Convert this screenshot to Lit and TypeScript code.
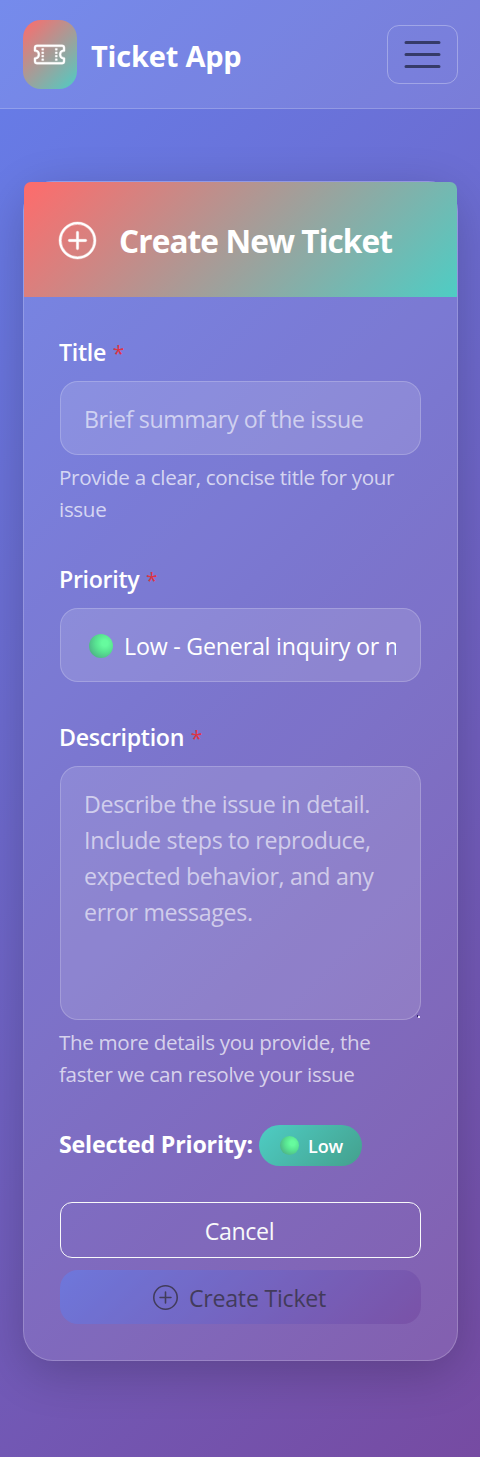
import { LitElement, html, svg, css } from "lit";
import { customElement } from "lit/decorators.js";

const plusCircle = svg`
  <path d="M8 15A7 7 0 1 1 8 1a7 7 0 0 1 0 14m0 1A8 8 0 1 0 8 0a8 8 0 0 0 0 16"/>
  <path d="M8 4a.5.5 0 0 1 .5.5v3h3a.5.5 0 0 1 0 1h-3v3a.5.5 0 0 1-1 0v-3h-3a.5.5 0 0 1 0-1h3v-3A.5.5 0 0 1 8 4"/>`;

const ticket = svg`
  <path d="M4 4.85v.9h1v-.9zm7 0v.9h1v-.9zm-7 1.8v.9h1v-.9zm7 0v.9h1v-.9zm-7 1.8v.9h1v-.9zm7 0v.9h1v-.9zm-7 1.8v.9h1v-.9zm7 0v.9h1v-.9z"/>
  <path d="M1.5 3A1.5 1.5 0 0 0 0 4.5V6a.5.5 0 0 0 .5.5 1.5 1.5 0 1 1 0 3 .5.5 0 0 0-.5.5v1.5A1.5 1.5 0 0 0 1.5 13h13a1.5 1.5 0 0 0 1.5-1.5V10a.5.5 0 0 0-.5-.5 1.5 1.5 0 0 1 0-3A.5.5 0 0 0 16 6V4.5A1.5 1.5 0 0 0 14.5 3zM1 4.5a.5.5 0 0 1 .5-.5h13a.5.5 0 0 1 .5.5v1.05a2.5 2.5 0 0 0 0 4.9v1.05a.5.5 0 0 1-.5.5h-13a.5.5 0 0 1-.5-.5v-1.05a2.5 2.5 0 0 0 0-4.9z"/>`;

@customElement("app-root")
export class AppRoot extends LitElement {
  static styles = css`
    :host {
      display: block;
      min-height: 1457px;
      box-sizing: border-box;
      background: linear-gradient(135deg, #667eea 0%, #764ba2 100%);
      font-family: "Open Sans", "Noto Sans", sans-serif;
      font-size: 23.2px;
      letter-spacing: -0.4px;
      line-height: 36px;
      color: #fff;
      overflow: hidden;
    }
    * { box-sizing: border-box; }
    svg { display: block; fill: currentColor; flex: none; }
    .nav {
      height: 109px;
      display: flex;
      align-items: center;
      padding: 0 22px 0 23px;
      background: rgba(255, 255, 255, 0.1);
      border-bottom: 1px solid rgba(255, 255, 255, 0.2);
    }
    .logo {
      width: 54px;
      height: 69px;
      border-radius: 18px;
      display: grid;
      place-items: center;
      background: linear-gradient(135deg, #ff6b6b, #4ecdc4);
    }
    .logo svg { width: 31px; height: 31px; margin-right: 1px; stroke: currentColor; stroke-width: 0.2; overflow: visible; }
    .brand {
      margin-left: 14px;
      padding-top: 3px;
      flex: 1;
      font-size: 29px;
      font-weight: 700;
      letter-spacing: -0.2px;
      white-space: nowrap;
    }
    .toggler {
      width: 71px;
      height: 59px;
      border: 1px solid rgba(255, 255, 255, 0.3);
      border-radius: 12px;
      padding: 0;
      background: none;
      color: #363b69;
      display: grid;
      place-items: center;
    }
    .toggler svg { width: 45px; height: 45px; fill: none; }
    .card {
      margin: 72px 22px 0 23px;
      height: 1180px;
      border: 1px solid rgba(255, 255, 255, 0.2);
      border-radius: 30px;
      background: rgba(255, 255, 255, 0.1);
      box-shadow: 0 12px 48px rgba(0, 0, 0, 0.2);
    }
    .head {
      height: 115px;
      border-radius: 7px 7px 0 0;
      background: linear-gradient(135deg, #ff6b6b, #4ecdc4);
      display: flex;
      align-items: center;
      padding-left: 35px;
      padding-top: 3px;
    }
    .head svg { width: 37px; height: 37px; margin-top: -1px; stroke: currentColor; stroke-width: 0.18; overflow: visible; }
    .head h1 {
      margin: 0 0 0 23px;
      font-size: 31.6px;
      font-weight: 700;
      letter-spacing: -0.92px;
      white-space: nowrap;
    }
    .body { padding: 36px 36px 0 36px; }
    .label {
      display: block;
      height: 48px;
      padding-top: 1px;
      font-weight: 600;
      letter-spacing: -0.32px;
      white-space: nowrap;
      margin-left: -1px;
    }
    .req { color: #dc3545; font-weight: 400; font-size: 21px; margin-left: 1px; }
    .field {
      display: block;
      width: 361px;
      height: 74px;
      margin: 0;
      border: 1px solid rgba(255, 255, 255, 0.2);
      border-radius: 18px;
      background: rgba(255, 255, 255, 0.13);
      padding: 1px 23px 0;
      font: inherit;
      letter-spacing: inherit;
      color: #fff;
      outline: none;
    }
    .field::placeholder { color: rgba(255, 255, 255, 0.6); opacity: 1; }
    .grow { position: relative; }
    .area { height: 254px; padding: 19px 23px; resize: none; overflow: hidden; letter-spacing: -0.33px; }
    .grip { position: absolute; right: 0; bottom: 0; width: 5px; height: 5px; }
    .select { padding: 19px 24px 0; letter-spacing: -0.2px; }
    .choice { display: flex; align-items: center; overflow: hidden; white-space: nowrap; }
    .dot {
      flex: none;
      width: 24px;
      height: 24px;
      border-radius: 50%;
      background: radial-gradient(circle at 66% 38%, #66fb9e 0 14%, #58e391 42%, #4aa283 92%);
    }
    .choice .dot { margin: 0 11px 0 4px; }
    .help {
      margin: 6px 0 0 -1px;
      height: 64px;
      font-size: 20.6px;
      line-height: 32px;
      letter-spacing: -0.32px;
      color: rgba(255, 255, 255, 0.7);
      white-space: nowrap;
    }
    .g1 { margin-bottom: 35px; }
    .g2 { margin-bottom: 36px; }
    .g3 { margin-bottom: 35px; }
    .selected { display: flex; align-items: center; height: 41px; margin-left: -1px; white-space: nowrap; }
    .selected strong { font-weight: 700; width: 200px; letter-spacing: -0.2px; padding-bottom: 3px; }
    .badge {
      width: 103px;
      height: 41px;
      border-radius: 21px;
      display: flex;
      align-items: center;
      padding-left: 21px;
      font-size: 18px;
      font-weight: 600;
      letter-spacing: -0.1px;
      background: linear-gradient(135deg, #4ecdc4, #44a08d);
    }
    .badge .dot { width: 19px; height: 19px; margin-right: 9px; }
    .btn {
      width: 361px;
      margin: 0;
      padding: 1px 2px 0 0;
      display: flex;
      align-items: center;
      justify-content: center;
      font: inherit;
      letter-spacing: -0.35px;
      border-radius: 12px;
      background: none;
      color: #f8f9fa;
    }
    .cancel { height: 56px; margin-top: 36px; border: 1px solid #f8f9fa; }
    .create {
      height: 54px;
      margin-top: 12px;
      border: 0;
      border-radius: 18px;
      color: #212529;
      letter-spacing: -0.25px;
      background: linear-gradient(135deg, #667eea, #764ba2);
      opacity: 0.65;
    }
    .create svg { width: 25px; height: 25px; margin: 0 11px 0 0; }
  `;

  render() {
    return html`
      <nav class="nav">
        <div class="logo"><svg viewBox="0 0 16 16">${ticket}</svg></div>
        <div class="brand">Ticket App</div>
        <button class="toggler" aria-label="Toggle navigation">
          <svg viewBox="0 0 30 30"><path stroke="currentColor" stroke-linecap="round" stroke-miterlimit="10" stroke-width="2" d="M4 7h22M4 15h22M4 23h22"/></svg>
        </button>
      </nav>
      <main class="card">
        <header class="head"><svg viewBox="0 0 16 16">${plusCircle}</svg><h1>Create New Ticket</h1></header>
        <div class="body">
          <div class="g1">
            <label class="label">Title <span class="req">*</span></label>
            <input class="field" placeholder="Brief summary of the issue">
            <div class="help">Provide a clear, concise title for your<br>issue</div>
          </div>
          <div class="g2">
            <label class="label">Priority <span class="req">*</span></label>
            <div class="field select"><div class="choice"><span class="dot"></span>Low - General inquiry or minor issue</div></div>
          </div>
          <div class="g3">
            <label class="label">Description <span class="req">*</span></label>
            <div class="grow">
              <textarea class="field area" placeholder="Describe the issue in detail. Include steps to reproduce, expected behavior, and any error messages."></textarea>
              <svg class="grip" viewBox="0 0 5 5"><path fill="#2c2560" d="M1 0h1v2H1z"/><path fill="#e6dcf5" d="M2 1h2v2H2z"/></svg>
            </div>
            <div class="help">The more details you provide, the<br>faster we can resolve your issue</div>
          </div>
          <div class="selected"><strong>Selected Priority:</strong><span class="badge"><span class="dot"></span>Low</span></div>
          <button class="btn cancel">Cancel</button>
          <button class="btn create"><svg viewBox="0 0 16 16">${plusCircle}</svg>Create Ticket</button>
        </div>
      </main>
    `;
  }
}
